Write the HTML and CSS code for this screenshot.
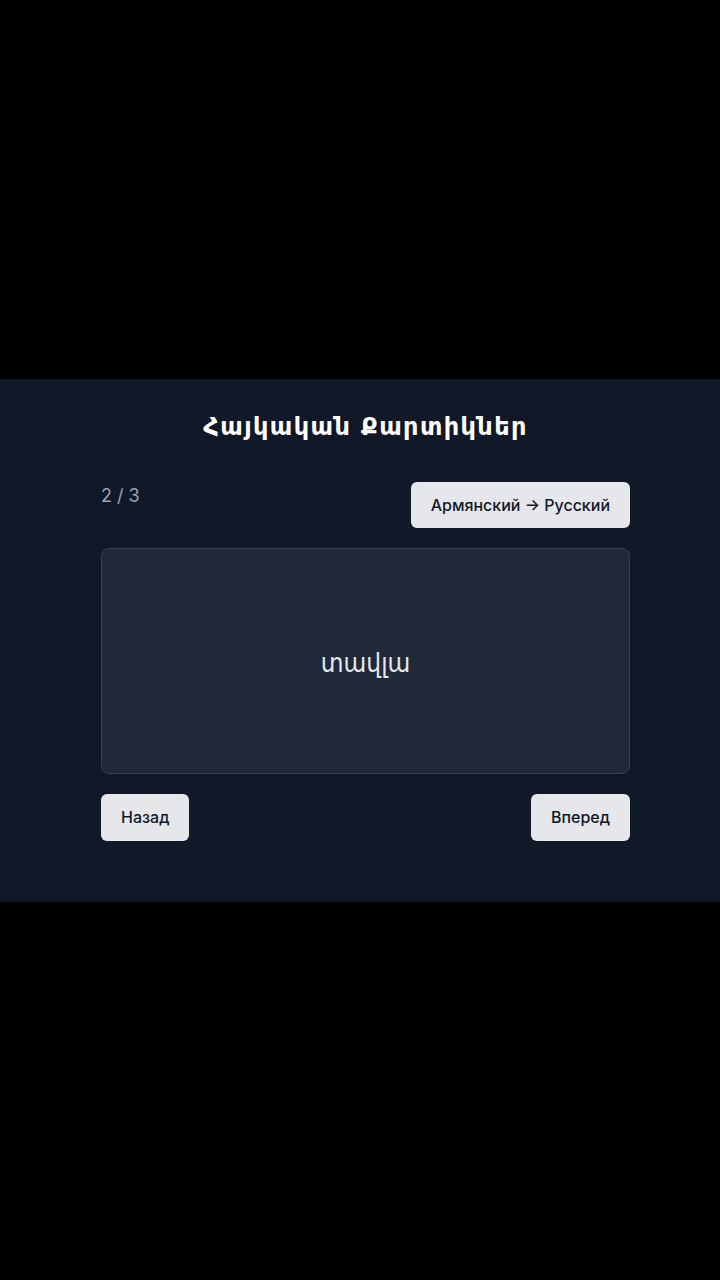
FILE: index.html
```html
<!DOCTYPE html>
<html lang="hy">
<head>
<meta charset="utf-8">
<title>Հայկական Քարտիկներ</title>
<link rel="stylesheet" href="styles.css">
</head>
<body>
<main class="panel">
  <h1 class="title">Հայկական Քարտիկներ</h1>
  <div class="toolbar">
    <span class="counter">2 / 3</span>
    <button class="btn btn-lang">Армянский → Русский</button>
  </div>
  <div class="card">
    <span class="word">տավլա</span>
  </div>
  <div class="nav">
    <button class="btn">Назад</button>
    <button class="btn">Вперед</button>
  </div>
</main>
</body>
</html>
```

FILE: styles.css
```css
* { box-sizing: border-box; }
html, body { margin: 0; height: 100%; }
body {
  background: #000;
  display: flex;
  align-items: center;
  font-family: Inter, "DejaVu Sans", "Noto Sans", sans-serif;
}
.panel {
  width: 100%;
  background: #111827;
  padding: 32px 90px 61px 101px;
}
.title {
  margin: 0 0 39px;
  text-align: center;
  color: #ffffff;
  font-family: "DejaVu Sans", sans-serif;
  font-size: 24px;
  letter-spacing: 1.4px;
  line-height: 32px;
  font-weight: 700;
}
.toolbar {
  display: flex;
  justify-content: space-between;
  align-items: flex-start;
}
.counter {
  color: #9ca3af;
  font-size: 18px;
  line-height: 28px;
}
.btn {
  font-family: Inter, "DejaVu Sans", sans-serif;
  background: #e5e7eb;
  color: #111827;
  border: none;
  border-radius: 6px;
  font-size: 16px;
  line-height: 24px;
  padding: 11px 20px 12px;
  font-weight: 500;
}
.btn-lang {
  padding: 11px 20px;
}
.card {
  margin: 20px 0;
  height: 226px;
  background: #1f2937;
  border: 1px solid #374151;
  border-radius: 8px;
  display: flex;
  align-items: center;
  justify-content: center;
}
.word {
  color: #e5e7eb;
  font-family: "DejaVu Sans Condensed", "DejaVu Sans", sans-serif;
  font-size: 26px;
  line-height: 36px;
  padding-top: 4px;
}
.nav {
  display: flex;
  justify-content: space-between;
}
```
